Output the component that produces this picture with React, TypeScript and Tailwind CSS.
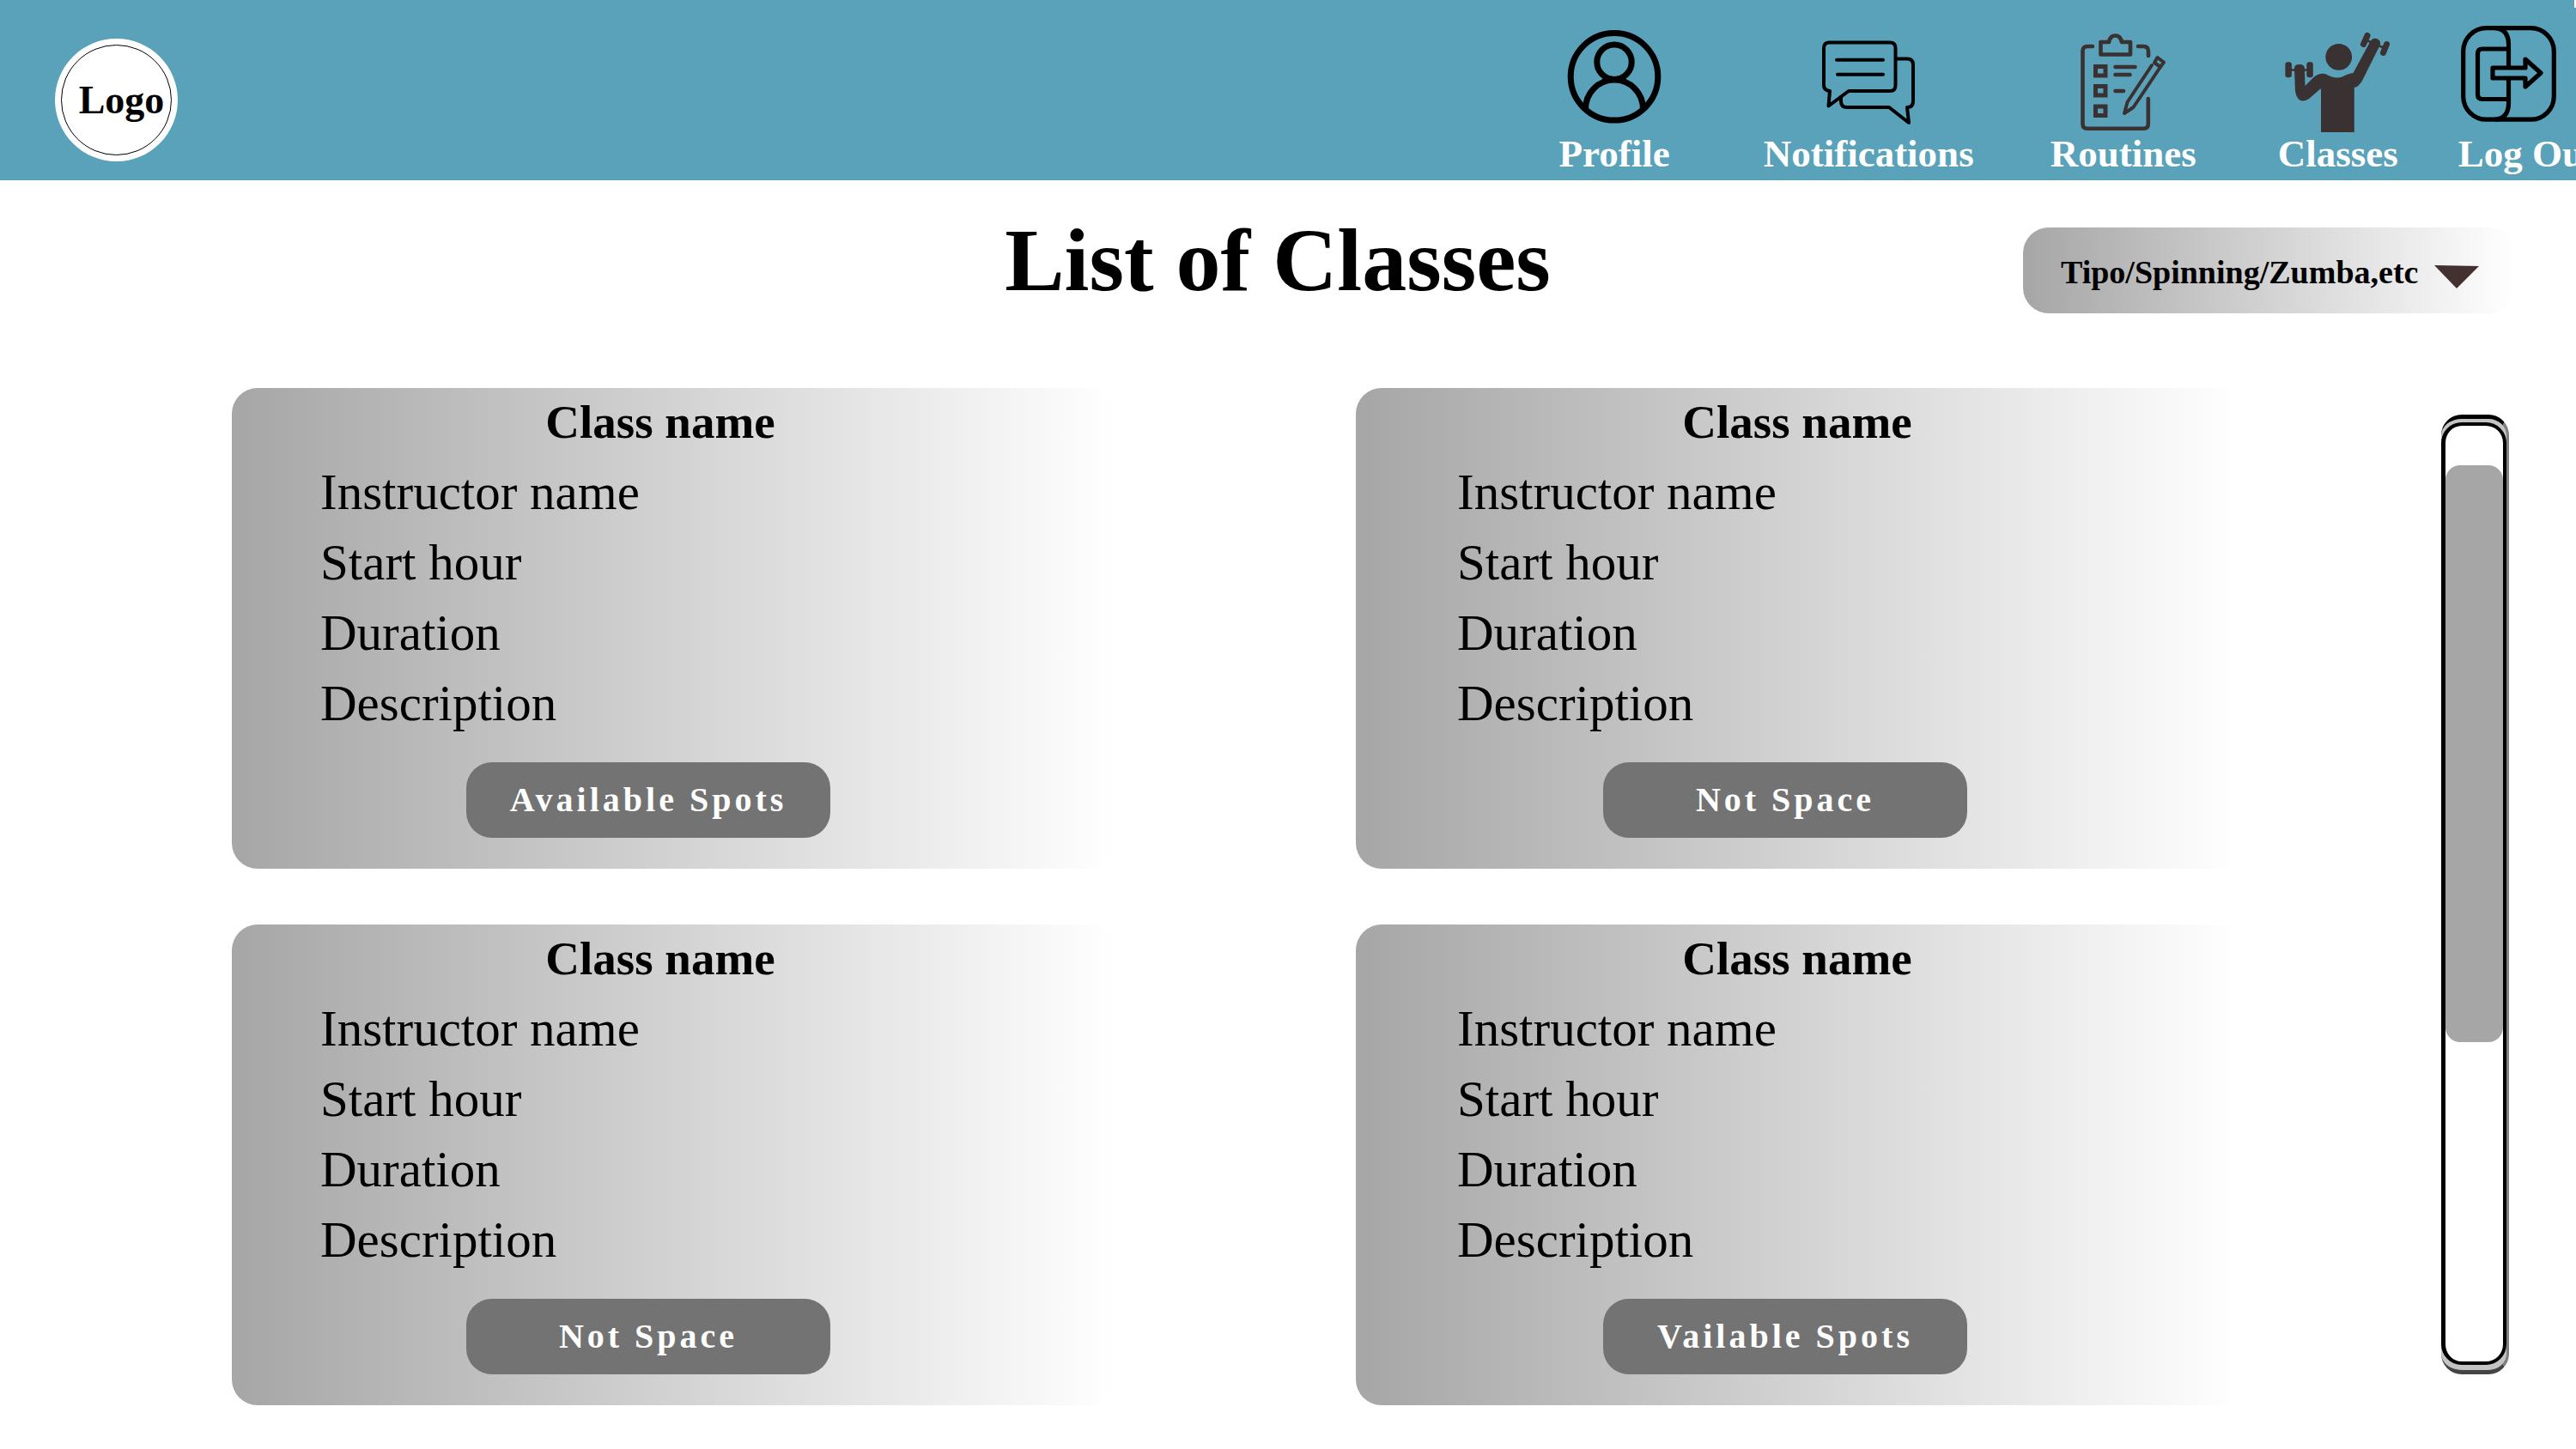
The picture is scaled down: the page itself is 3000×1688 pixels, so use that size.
import type { ReactNode } from "react";

const INK = "#3a3232";

function ProfileIcon() {
  return (
    <svg className="h-32 w-[108px] overflow-visible" viewBox="0 0 108 128" fill="none" stroke="#000" strokeWidth="7" aria-hidden="true">
      <circle cx="54" cy="61.3" r="50.8" />
      <circle cx="54" cy="44.3" r="20.2" />
      <path d="M20.5 99 A33.5 34 0 0 1 87.5 99" />
    </svg>
  );
}

function NotificationsIcon() {
  return (
    <svg className="h-32 w-[108px] overflow-visible" viewBox="0 0 108 128" fill="none" stroke="#000" strokeWidth="4" strokeLinecap="round" strokeLinejoin="round" aria-hidden="true">
      <path d="M31 78 H79 q6.5 0 6.5-6.5 V28 q0-6.5-6.5-6.5 H8.5 Q2 21.5 2 28 V71 q0 6.5 7 7 L7.5 95.5 Z" />
      <path d="M86 40.5 H99 q7 0 7 7 V90 q0 7-7 7 L101 115 L78 97 H29 q-7 0-7-7 V85" />
      <path d="M17 41.7 H71 M18 58.7 H71" />
    </svg>
  );
}

function RoutinesIcon() {
  return (
    <svg className="h-32 w-[100px] overflow-visible" viewBox="0 0 100 128" fill="none" stroke={INK} strokeWidth="4.6" strokeLinecap="round" strokeLinejoin="round" aria-hidden="true">
      <path d="M14 26 H8 q-5.5 0-5.5 5.5 V116.5 q0 5.2 5.2 5.2 H73.5 q5.3 0 5.3-5.2 V87" />
      <path d="M67 26 H73 q6 0 6 6 V37" />
      <path d="M23.5 21 H33 q1.5-7.5 7.5-7.5 q6 0 7.5 7.5 H58 V35.5 H23.5 Z" />
      <g strokeLinejoin="miter" strokeWidth="5">
        <rect x="17.5" y="49.5" width="11.5" height="10.5" />
        <rect x="17.5" y="72.5" width="11.5" height="10.5" />
        <rect x="17.5" y="96" width="11.5" height="10.5" />
      </g>
      <path d="M40.5 50 H63.5 M40.5 59 H57.5 M40.5 78 H50" />
      <path strokeWidth="4" d="M83 48 L54.5 91 L51 104 L61.5 97 L93 50 M86 45 L89.5 39 L97 44.5 L93 50 Z" />
    </svg>
  );
}

function ClassesIcon() {
  return (
    <svg className="h-32 w-[124px] overflow-visible" viewBox="0 0 124 128" fill={INK} aria-hidden="true">
      <circle cx="62.7" cy="38.3" r="15.4" />
      <path d="M11 52 Q10.5 47 17 47 Q23 47 23 52 L23.5 72 L34 61.5 Q41 56 48 58.5 Q61 66 72 59 Q76 57.5 79.5 57 L99 21 Q102 15 108 17.5 Q113 20 110 26 L90 66 Q86 73 80.8 74 V126 H42 V75 L28 87 Q20 92 15.5 87 Q12.5 83 12 78 Z" />
      <rect x="0.4" y="44.3" width="7.5" height="18" rx="3" />
      <rect x="25.3" y="44.3" width="7.5" height="18" rx="3" />
      <path d="M4 53.5 H29 M94 18.5 L117 28.5" stroke={INK} strokeWidth="2.5" />
      <path d="M96 13.5 L91.5 23.5 M118.5 23.5 L114.5 33.5" stroke={INK} strokeWidth="7" strokeLinecap="round" />
    </svg>
  );
}

function LogOutIcon() {
  return (
    <svg className="h-32 w-[116px] overflow-visible" viewBox="-3 0 116 128" fill="none" stroke="#000" strokeWidth="5.2" strokeLinejoin="round" aria-hidden="true">
      <rect x="2.7" y="4.7" width="105.6" height="106.5" rx="27" />
      <path d="M40 4.7 Q55.5 6 55.5 24 V50 M55.5 64 V92 Q55.5 110 40 111.2" />
      <path d="M55.5 29 H25 q-5.5 0-5.5 5.5 V82 q0 5.5 5.5 5.5 H55.5" />
      <path d="M37 51 H75 V41 L93 57 L75 73 V63 H37 Z" />
    </svg>
  );
}

function NavItem({ label, icon, className }: { label: string; icon: ReactNode; className: string }) {
  return (
    <a href="#" className={`flex shrink-0 flex-col text-[45px] leading-[46px] font-bold whitespace-nowrap text-white ${className}`}>
      {icon}
      <span>{label}</span>
    </a>
  );
}

function ClassCard({ status, indent }: { status: string; indent: string }) {
  return (
    <article className={`rounded-[30px] bg-[linear-gradient(90deg,#a6a6a6,#fff)] pb-9 ${indent}`}>
      <div className="w-[764px] max-w-full">
        <h2 className="pl-7 text-center text-[55px] leading-[80px] font-bold">Class name</h2>
        <ul className="text-[59px] leading-[82px]">
          <li>Instructor name</li>
          <li>Start hour</li>
          <li>Duration</li>
          <li>Description</li>
        </ul>
        <button type="button" className="mx-auto mt-7 block h-[88px] w-[424px] rounded-[30px] bg-[#737373] text-[40px] font-bold tracking-[4px] text-white">
          {status}
        </button>
      </div>
    </article>
  );
}

export default function App() {
  return (
    <div className="min-h-screen overflow-hidden bg-white font-['Liberation_Serif',serif] text-black">
      <header className="relative flex h-[210px] items-start overflow-hidden bg-[#59a2ba] pl-16">
        <a href="#" className="mt-[45px] flex size-[143px] shrink-0 items-center justify-center rounded-full bg-white p-[7px]">
          <span className="flex size-full items-center justify-center rounded-full border border-black pl-3 text-[46px] leading-[46px] font-bold">Logo</span>
        </a>
        <nav aria-label="Main" className="-mr-6 ml-auto flex pt-7">
          <NavItem label="Profile" icon={<ProfileIcon />} className="items-center" />
          <NavItem label="Notifications" icon={<NotificationsIcon />} className="ml-[109px] items-center" />
          <NavItem label="Routines" icon={<RoutinesIcon />} className="ml-[89px] items-center" />
          <NavItem label="Classes" icon={<ClassesIcon />} className="ml-[95px] items-center" />
          <NavItem label="Log Out" icon={<LogOutIcon />} className="ml-[70px] items-start" />
        </nav>
        <span className="absolute top-0 right-0 h-[9px] w-[2px] bg-white" />
      </header>

      <main>
        <div className="grid grid-cols-[1fr_auto_1fr] items-start pt-[55px] pr-[71px] pl-[47px]">
          <h1 className="col-start-2 text-[104px] leading-[76px] font-bold whitespace-nowrap">List of Classes</h1>
          <div className="relative w-[573px] justify-self-end">
            <select aria-label="Class type" className="h-[100px] w-full appearance-none rounded-[30px] bg-[linear-gradient(90deg,#a6a6a6,#fff)] pt-1 pl-11 text-[38px] font-bold">
              <option>Tipo/Spinning/Zumba,etc</option>
            </select>
            <svg className="pointer-events-none absolute top-[44px] right-[42px] h-[27px] w-[52px]" viewBox="0 0 52 27" aria-hidden="true">
              <path d="M0 0 L52 1 L26 27 Z" fill="#433030" />
            </svg>
          </div>
        </div>

        <div className="flex gap-[234px] pt-[87px] pr-[78px] pb-[51px] pl-[270px]">
          <section aria-label="Classes" className="grid flex-1 grid-cols-2 gap-x-[279px] gap-y-[65px]">
            <ClassCard status="Available Spots" indent="pl-[103px]" />
            <ClassCard status="Not Space" indent="pl-[118px]" />
            <ClassCard status="Not Space" indent="pl-[103px]" />
            <ClassCard status="Vailable Spots" indent="pl-[118px]" />
          </section>

          <div className="mt-[31px] mb-9 flex w-[79px] shrink-0 flex-col rounded-[24px] border-t-[5px] border-r-[3px] border-b-[5px] border-t-black border-r-[#808080] border-b-[#444] bg-[#c4c4c4]">
            <div className="mt-1 mb-1.5 flex-1 rounded-[24px] border-4 border-l-[5px] border-black bg-white">
              <div role="scrollbar" aria-label="Scroll classes" aria-controls="root" aria-valuenow={8} className="mt-[46px] h-[672px] rounded-[17px] bg-[#a6a6a6]" />
            </div>
          </div>
        </div>
      </main>
    </div>
  );
}
